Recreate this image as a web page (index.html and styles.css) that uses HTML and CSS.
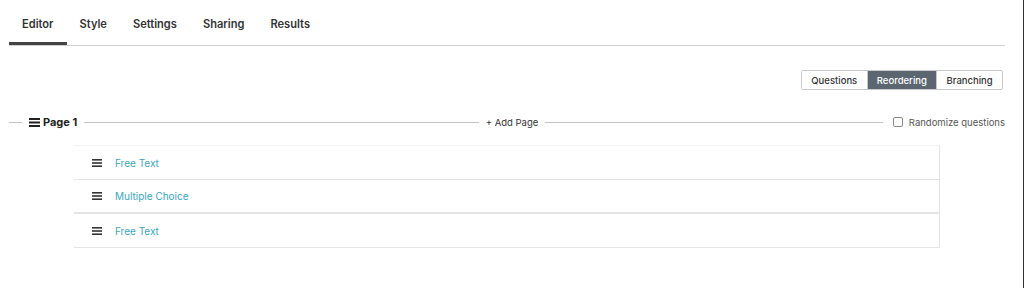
FILE: index.html
```html
<!DOCTYPE html>
<html lang="en">
<head>
    <meta charset="UTF-8">
    <meta name="viewport" content="width=device-width, initial-scale=1.0">
    <title>Survey Editor</title>
    <link rel="stylesheet" href="styles.css">
</head>
<body>
    <div class="page">
        <nav class="tabs">
            <a class="tab active">Editor</a>
            <a class="tab">Style</a>
            <a class="tab">Settings</a>
            <a class="tab">Sharing</a>
            <a class="tab">Results</a>
        </nav>

        <div class="toolbar">
            <div class="btn-group">
                <button class="btn">Questions</button>
                <button class="btn selected">Reordering</button>
                <button class="btn">Branching</button>
            </div>
        </div>

        <div class="page-row">
            <div class="side first">
                <span class="rule short"></span>
                <span class="page-title">
                    <svg class="burger" width="11" height="9" viewBox="0 0 11 9"><rect y="0" width="11" height="2"/><rect y="3.5" width="11" height="2"/><rect y="7" width="11" height="2"/></svg>
                    Page 1
                </span>
                <span class="rule"></span>
            </div>
            <span class="add-page">+ Add Page</span>
            <div class="side">
                <span class="rule"></span>
                <label class="randomize"><span class="checkbox"></span>Randomize questions</label>
            </div>
        </div>

        <ul class="question-list">
            <li class="question">
                <svg class="burger" width="10" height="8" viewBox="0 0 10 8"><rect y="0" width="10" height="1.6"/><rect y="3.2" width="10" height="1.6"/><rect y="6.4" width="10" height="1.6"/></svg>
                <span class="q-name">Free Text</span>
            </li>
            <li class="question thick">
                <svg class="burger" width="10" height="8" viewBox="0 0 10 8"><rect y="0" width="10" height="1.6"/><rect y="3.2" width="10" height="1.6"/><rect y="6.4" width="10" height="1.6"/></svg>
                <span class="q-name">Multiple Choice</span>
            </li>
            <li class="question">
                <svg class="burger" width="10" height="8" viewBox="0 0 10 8"><rect y="0" width="10" height="1.6"/><rect y="3.2" width="10" height="1.6"/><rect y="6.4" width="10" height="1.6"/></svg>
                <span class="q-name">Free Text</span>
            </li>
        </ul>
    </div>
</body>
</html>
```

FILE: styles.css
```css
html, body {
    margin: 0;
    height: 100%;
}
body {
    font-family: Inter, 'Noto Sans', sans-serif;
    color: #333;
    background-color: #ffffff;
    border-right: 1px solid #333;
    box-sizing: border-box;
}
.page {
    padding: 0 18px 0 9px;
}
.tabs {
    display: flex;
    border-bottom: 1px solid #cfcfcf;
}
.tab {
    padding: 17px 13px 11px;
    line-height: 14px;
    font-size: 11.1px;
    font-weight: 600;
    color: #333;
    border-bottom: 3px solid transparent;
}
.tab.active {
    border-bottom-color: #444;
}
.toolbar {
    display: flex;
    justify-content: flex-end;
    margin-top: 24px;
    padding-right: 2px;
}
.btn-group {
    display: flex;
    border: 1px solid #c8c8c8;
    border-radius: 2px;
}
.btn {
    font-family: inherit;
    font-size: 9.5px;
    font-weight: 500;
    color: #333;
    background: #fff;
    border: none;
    border-left: 1px solid #c8c8c8;
    height: 18px;
    padding: 0 9.3px;
}
.btn:first-child {
    border-left: none;
}
.btn.selected {
    background-color: #5b6670;
    color: #fff;
}
.page-row {
    display: grid;
    grid-template-columns: 1fr auto 1fr;
    align-items: center;
    margin-top: 22px;
    height: 20px;
    padding-left: 10px;
}
.side {
    display: flex;
    align-items: center;
}
.side.first {
    margin-left: -10px;
}
.rule {
    flex: 1;
    height: 1px;
    background-color: #c4c4c4;
}
.rule.short {
    flex: 0 0 13px;
}
.page-title {
    display: flex;
    align-items: center;
    gap: 3px;
    font-size: 11px;
    font-weight: 700;
    color: #222;
    padding: 0 7px;
}
.page-title .burger {
    fill: #222;
}
.add-page {
    font-size: 9.5px;
    color: #333;
    padding: 0 7px;
}
.randomize {
    display: flex;
    align-items: center;
    font-size: 9.5px;
    color: #555;
    padding-left: 10px;
}
.checkbox {
    width: 8px;
    height: 8px;
    border: 1px solid #888;
    border-radius: 2px;
    margin-right: 6px;
}
.question-list {
    list-style: none;
    margin: 13px 65px 0;
    padding: 0;
    border-top: 1px solid #f2f2f2;
    border-right: 1px solid #e4e4e4;
}
.question {
    display: flex;
    align-items: center;
    height: 33px;
    padding-left: 18px;
    border-bottom: 1px solid #e4e4e4;
}
.question.thick {
    border-bottom-width: 2px;
    height: 32px;
}
.question .burger {
    fill: #333;
    margin-right: 13px;
}
.q-name {
    font-size: 10px;
    color: #3aa6c4;
}
```
